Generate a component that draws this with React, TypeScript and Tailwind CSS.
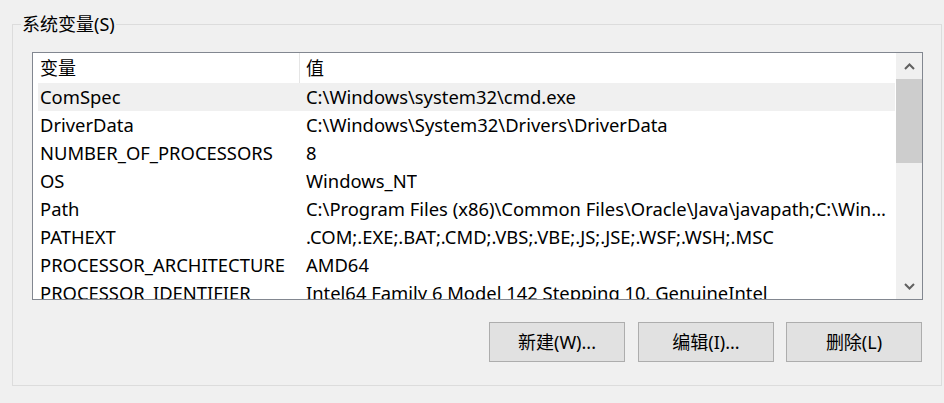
import React from "react";

const rows: [string, string][] = [
  ["ComSpec", "C:\\Windows\\system32\\cmd.exe"],
  ["DriverData", "C:\\Windows\\System32\\Drivers\\DriverData"],
  ["NUMBER_OF_PROCESSORS", "8"],
  ["OS", "Windows_NT"],
  ["Path", "C:\\Program Files (x86)\\Common Files\\Oracle\\Java\\javapath;C:\\Win..."],
  ["PATHEXT", ".COM;.EXE;.BAT;.CMD;.VBS;.VBE;.JS;.JSE;.WSF;.WSH;.MSC"],
  ["PROCESSOR_ARCHITECTURE", "AMD64"],
  ["PROCESSOR_IDENTIFIER", "Intel64 Family 6 Model 142 Stepping 10, GenuineIntel"],
];

function Chevron({ up }: { up?: boolean }) {
  return (
    <svg width="11" height="7" viewBox="0 0 11 7">
      <path
        d={up ? "M1 6 L5.5 1.5 L10 6" : "M1 1 L5.5 5.5 L10 1"}
        fill="none"
        stroke="#606060"
        strokeWidth="2"
      />
    </svg>
  );
}

export default function App() {
  return (
    <div
      className="w-[944px] h-[403px] bg-[#f0f0f0] overflow-hidden pt-[24px] pl-[12px] text-black"
      style={{ fontFamily: "'Noto Sans', 'Noto Sans CJK SC', sans-serif" }}
    >
      <div className="relative w-[930px] h-[362px] border border-[#dcdcdc] pl-[19px] pt-[27px]">
        <span className="absolute left-[8px] top-[-13px] px-[1px] bg-[#f0f0f0] text-[18px] leading-[24px]">
          系统变量(S)
        </span>
        <div className="flex w-[891px] h-[248px] border border-[#828790] bg-white">
          <div className="flex-1 flex flex-col overflow-hidden text-[18px]">
            <div className="flex h-[30px] shrink-0 items-center pl-[5px]">
              <div className="w-[261px] pl-[2px]">变量</div>
              <div className="w-px h-full bg-[#e5e5e5]" />
              <div className="pl-[6px]">值</div>
            </div>
            {rows.map(([k, v], i) => (
              <div
                key={k}
                className={`flex h-[28px] shrink-0 items-center ml-[5px] mr-[1px] whitespace-nowrap text-[18.4px] ${
                  i === 0 ? "bg-[#f0f0f0]" : ""
                }`}
              >
                <div className="w-[261px] shrink-0 pl-[2px] overflow-hidden">{k}</div>
                <div className="pl-[7px] overflow-hidden">{v}</div>
              </div>
            ))}
          </div>
          <div className="w-[26px] shrink-0 flex flex-col bg-[#f0f0f0]">
            <div className="h-[26px] flex items-center justify-center">
              <Chevron up />
            </div>
            <div className="h-[84px] bg-[#cdcdcd]" />
            <div className="flex-1" />
            <div className="h-[26px] flex items-center justify-center">
              <Chevron />
            </div>
          </div>
        </div>
        <div className="flex w-[890px] mt-[22px] justify-end text-[18px]">
          <button className="w-[136px] h-[40px] bg-[#e1e1e1] border border-[#adadad] flex items-center justify-center">
            新建(W)...
          </button>
          <button className="ml-[13px] w-[136px] h-[40px] bg-[#e1e1e1] border border-[#adadad] flex items-center justify-center">
            编辑(I)...
          </button>
          <button className="ml-[12px] w-[136px] h-[40px] bg-[#e1e1e1] border border-[#adadad] flex items-center justify-center">
            删除(L)
          </button>
        </div>
      </div>
    </div>
  );
}
